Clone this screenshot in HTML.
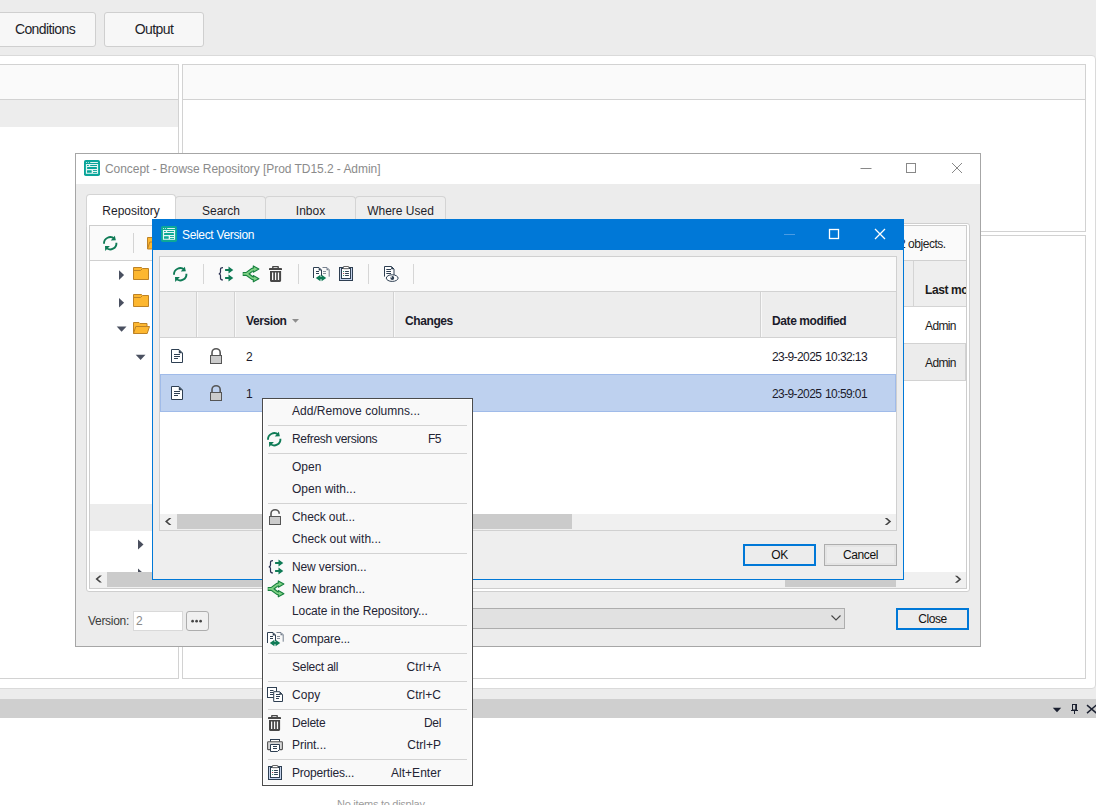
<!DOCTYPE html>
<html lang="en">
<head>
<meta charset="utf-8">
<title>Select Version</title>
<style>
html,body{margin:0;padding:0}
body{width:1096px;height:805px;overflow:hidden;position:relative;background:#ececec;font-family:"Liberation Sans",Arial,sans-serif;font-size:12px;color:#1b1b1b}
div,span{box-sizing:border-box}
.a{position:absolute}
.t{position:absolute;white-space:nowrap;line-height:1}
svg{position:absolute;overflow:visible}
/* top buttons */
.topbtn{position:absolute;top:12px;height:35px;border:1px solid #cfcfcf;border-radius:3px;background:#f7f7f7;font-size:14px;letter-spacing:-0.6px;text-align:center;line-height:33px;color:#1e1e2a}
/* main white container */
#main{left:-6px;top:55px;width:1102px;height:634px;background:#fff;border:1px solid #dadada;border-radius:4px}
.pnl{position:absolute;border:1px solid #d2d2d2;background:#fff}
.pnl .hd{position:absolute;left:0;right:0;top:0;height:35px;background:#fafafa;border-bottom:1px solid #d2d2d2}
/* dialog 1 */
#d1{left:75px;top:153px;width:906px;height:494px;background:#ececec;border:1px solid #a6a6a6}
#d1 .tb{position:absolute;left:0;top:0;right:0;height:30px;background:#fff}
.tab{position:absolute;top:43px;height:30px;border:1px solid #d4d4d4;border-bottom:none;border-radius:4px 4px 0 0;background:#eeeeee;font-size:12px;text-align:center;line-height:29px;color:#1e1e2a}
.tab.on{height:33px;background:#fff;line-height:33px}
/* dialog 2 */
#d2{left:152px;top:219px;width:752px;height:361px;background:#eeeeee;border:1px solid #0078d7}
#d2 .tb{position:absolute;left:0;top:0;right:0;height:30px;background:#0078d7}
.btn{position:absolute;height:22px;background:#ececec;box-shadow:inset 0 0 0 2px #e4e4e4;border:1px solid #adadad;text-align:center;font-size:12px;letter-spacing:-0.4px;line-height:20px;color:#111}
.btn.def{border:2px solid #0078d7;line-height:18px;box-shadow:none}
.gh{font-size:12px;font-weight:bold;letter-spacing:-0.4px;color:#1b1b2b}
.gd{font-size:12px;letter-spacing:-0.6px;word-spacing:1px;color:#1b1b2b}
/* context menu */
#cm{left:262px;top:398px;width:211px;height:388px;background:#f9f9f9;border:1px solid #4b4b4b;box-shadow:inset 0 0 0 1px #fff;font-size:12px;color:#242434}
#cm .i{position:absolute;left:29px;white-space:nowrap;line-height:22px;height:22px;margin-top:-1px}
#cm .k{position:absolute;right:31px;white-space:nowrap;line-height:22px;height:22px;margin-top:-1px}
#cm .s{position:absolute;left:5px;right:5px;height:1px;background:#d3d3d3}
</style>
</head>
<body>
<!-- top buttons -->
<div class="topbtn" style="left:-10px;width:106px;padding-left:4px">Conditions</div>
<div class="topbtn" style="left:104px;width:100px">Output</div>

<!-- main container -->
<div id="main" class="a"></div>
<div class="pnl" style="left:-2px;top:64px;width:181px;height:615px"><div class="hd"></div><div class="a" style="left:0;right:0;top:35px;height:27px;background:#ededed"></div></div>
<div class="pnl" style="left:182px;top:64px;width:904px;height:168px"><div class="hd"></div></div>
<div class="pnl" style="left:182px;top:235px;width:904px;height:444px"></div>

<!-- bottom dock -->
<div class="a" style="left:0;top:699px;width:1096px;height:19px;background:#cfcfcf"></div>
<!-- dock icons -->
<svg style="left:1052px;top:704px" width="46" height="11" viewBox="0 0 46 11"><path d="M0.800 3.800h8.400l-4.200 4.400z" fill="#1b2030"/><rect x="20.500" y="0.500" width="4" height="5.500" fill="none" stroke="#1b2030" stroke-width="1"/><path d="M24 0.500v5.500" stroke="#1b2030" stroke-width="1.600"/><path d="M19 6.500h7M22.500 6.500v3.500" stroke="#1b2030" stroke-width="1" fill="none"/><path d="M35 1.100l9.400 8M44.400 1.100l-9.400 8" stroke="#1b2030" stroke-width="1.400" fill="none"/></svg>
<div class="a" style="left:0;top:718px;width:1096px;height:87px;background:#fff"></div>
<div class="t" style="left:337px;top:799px;font-size:11px;letter-spacing:-0.28px;color:#9c9c9c">No items to display</div>

<!-- DIALOG 1 -->
<div id="d1" class="a"><div class="tb"></div></div>
<!-- app icon -->
<svg style="left:84px;top:160px" width="16" height="16" viewBox="0 0 16 16"><rect x="0" y="0" width="16" height="16" rx="1.800" fill="#0aa59a"/><circle cx="2.500" cy="2.500" r="0.550" fill="#dff5f1"/><circle cx="4.400" cy="2.500" r="0.550" fill="#dff5f1"/><rect x="6.200" y="2" width="7.700" height="1" fill="#dff5f1"/><rect x="1.900" y="4" width="12.200" height="9.800" fill="#e4f6f3"/><rect x="3" y="5" width="1.800" height="1" fill="#0aa59a"/><rect x="6.200" y="5" width="6.800" height="1" fill="#0aa59a"/><rect x="3" y="7" width="10" height="1.900" rx="0.400" fill="#0aa59a"/><rect x="3" y="10.200" width="4.700" height="2.600" rx="0.400" fill="#0aa59a"/><rect x="9" y="10.100" width="4" height="0.900" fill="#0aa59a"/><rect x="9" y="12" width="4" height="0.900" fill="#0aa59a"/></svg>
<div class="t" style="left:105px;top:163px;font-size:12px;letter-spacing:-0.05px;color:#8b8b8b">Concept - Browse Repository [Prod TD15.2 - Admin]</div>
<!-- window controls -->
<svg style="left:860px;top:162px" width="104" height="12" viewBox="0 0 104 12"><path d="M0.5 6.5h11" stroke="#888" stroke-width="1" fill="none"/><rect x="46.5" y="1.5" width="9" height="9" fill="none" stroke="#888" stroke-width="1"/><path d="M92 1l10 10M102 1l-10 10" stroke="#888" stroke-width="1" fill="none"/></svg>
<!-- tabs -->
<div class="tab" style="left:175px;width:91px;top:196px;padding-left:1px">Search</div>
<div class="tab" style="left:265px;width:91px;top:196px">Inbox</div>
<div class="tab" style="left:355px;width:91px;top:196px">Where Used</div>
<!-- tab page -->
<div class="a" style="left:86px;top:223px;width:884px;height:369px;border:1px solid #cfcfcf;border-radius:0 3px 3px 3px;background:#fff"></div>
<div class="tab on" style="left:86px;width:90px;top:194px">Repository</div>
<!-- inner panel -->
<div class="a" style="left:89px;top:225px;width:878px;height:364px;border:1px solid #cdcdcd;background:#fff"></div>
<div class="a" style="left:90px;top:226px;width:876px;height:35px;background:#fafafa;border-bottom:1px solid #d0d0d0"></div>
<div class="a" style="left:133px;top:233px;width:1px;height:20px;background:#d4d4d4"></div>
<!-- refresh icon d1 -->
<svg style="left:103px;top:236px" width="15" height="15" viewBox="0 0 15 15"><g fill="none" stroke="#0f7b56" stroke-width="1.900"><path d="M1 7.700A6.200 6.200 0 0 1 11.400 2.800"/><path d="M13.400 6.700A6.200 6.200 0 0 1 3.200 11.900"/></g><path d="M11.800 -0.300L12.900 4.200L7.800 4.400Z" fill="#0f7b56"/><path d="M2 10.100L6.900 10.100L2.200 14.900Z" fill="#0f7b56"/></svg>
<!-- toolbar folder (partly hidden) -->
<svg style="left:147px;top:237px" width="16" height="13" viewBox="0 0 16 13"><path d="M0.500 12v-11.500h5.500l1 1.200h7v3" fill="#fdb730" stroke="#bd8226"/><path d="M0.500 12l2.300-7h13.700l-2.300 7z" fill="#fdb730" stroke="#bd8226"/></svg>
<div class="t" style="left:908px;top:238px;font-size:12px;letter-spacing:-0.45px;color:#222">objects.</div>
<div class="t" style="left:899px;top:238px;font-size:12px;color:#222">2</div>
<!-- tree -->
<svg style="left:116px;top:266px" width="36" height="100" viewBox="0 0 36 100">
<path d="M3 4.200l5.100 4.850-5.100 4.850z" fill="#4a5060"/>
<path d="M3 31.900l5.100 4.850-5.100 4.850z" fill="#4a5060"/>
<path d="M0.700 60.500h9.800l-4.900 5.200z" fill="#4a5060"/>
<path d="M19.700 88.700h9.800l-4.900 5.200z" fill="#4a5060"/>
<path d="M17.500 1.500h8l1 1h6v11h-15z" fill="#fdb730" stroke="#bd8226"/><path d="M17.500 4.500h7l1.500-1.500" fill="none" stroke="#bd8226"/>
<path d="M17.500 28.500h8l1 1h6v11h-15z" fill="#fdb730" stroke="#bd8226"/><path d="M17.500 31.500h7l1.500-1.500" fill="none" stroke="#bd8226"/>
<path d="M17.500 67.500v-11h5.500l1 1h7v3" fill="#fdb730" stroke="#bd8226"/><path d="M17.500 67.500l2.300-7h13.700l-2.300 7z" fill="#fdb730" stroke="#bd8226" stroke-linejoin="round"/>
</svg>
<!-- d1 grid (right part) -->
<div class="a" style="left:904px;top:261px;width:62px;height:46px;background:#eeeeee;border-bottom:1px solid #d4d4d4"></div>
<div class="a" style="left:913px;top:261px;width:1px;height:46px;background:#d4d4d4"></div>
<div class="t" style="left:925px;top:284px;font-size:12px;font-weight:bold;letter-spacing:-0.4px;width:41px;overflow:hidden">Last modified by</div>
<div class="t" style="left:925px;top:320px;font-size:12px;letter-spacing:-0.62px">Admin</div>
<div class="a" style="left:904px;top:343px;width:62px;height:38px;background:#ececec;border:1px solid #d2d2d2;border-left:none"></div>
<div class="t" style="left:925px;top:357px;font-size:12px;letter-spacing:-0.62px">Admin</div>
<!-- d1 tree gray row -->
<div class="a" style="left:90px;top:504px;width:70px;height:27px;background:#ececec"></div>
<svg style="left:137px;top:539px" width="8" height="34" viewBox="0 0 8 34"><path d="M1 0.500l5.500 5-5.500 5z" fill="#4a4f5e"/><path d="M1 29.500l5.500 5-5.500 5z" fill="#4a4f5e"/></svg>
<!-- d1 hscroll -->
<div class="a" style="left:90px;top:572px;width:876px;height:16px;background:#f0f0f0"></div>
<div class="a" style="left:107px;top:572px;width:300px;height:15px;background:#cbcbcb"></div>
<div class="a" style="left:785px;top:572px;width:111px;height:15px;background:#cbcbcb"></div>
<svg style="left:94px;top:575px" width="870" height="9" viewBox="0 0 870 9"><path d="M7.900 0.600h-2.300l-4.100 3.500 4.100 3.500h2.300l-4-3.500z" fill="#444"/><path d="M860.900 0.800h2.300l4.100 3.500-4.100 3.500h-2.300l4-3.500z" fill="#444"/></svg>
<!-- d1 bottom row -->
<div class="t" style="left:88px;top:615px;font-size:12px;letter-spacing:-0.3px;color:#3c3c3c">Version:</div>
<div class="a" style="left:133px;top:611px;width:50px;height:20px;border:1px solid #d9d9d9;background:#fff"></div>
<div class="t" style="left:136px;top:615px;font-size:12px;color:#8a8a8a">2</div>
<div class="a" style="left:186px;top:611px;width:23px;height:20px;border:1px solid #adadad;border-radius:3px;background:#f0f0f0"></div>
<svg style="left:191px;top:619px" width="13" height="4" viewBox="0 0 13 4"><circle cx="1.600" cy="2.200" r="1.350" fill="#444"/><circle cx="5.600" cy="2.200" r="1.350" fill="#444"/><circle cx="9.600" cy="2.200" r="1.350" fill="#444"/></svg>
<div class="a" style="left:400px;top:608px;width:445px;height:21px;border:1px solid #adadad;background:#e1e1e1"></div>
<svg style="left:831px;top:615px" width="10" height="6" viewBox="0 0 10 6"><path d="M0.500 0.500l4.500 4.500 4.500-4.500" fill="none" stroke="#444" stroke-width="1.100"/></svg>
<div class="btn def" style="left:896px;top:608px;width:73px">Close</div>

<!-- DIALOG 2 -->
<div id="d2" class="a"><div class="tb"></div></div>
<svg style="left:161px;top:226px" width="16" height="16" viewBox="0 0 16 16"><rect x="0" y="0" width="16" height="16" rx="1.800" fill="#0da996"/><circle cx="2.500" cy="2.500" r="0.550" fill="#dff5f1"/><circle cx="4.400" cy="2.500" r="0.550" fill="#dff5f1"/><rect x="6.200" y="2" width="7.700" height="1" fill="#dff5f1"/><rect x="1.900" y="4" width="12.200" height="9.800" fill="#e4f6f3"/><rect x="3" y="5" width="1.800" height="1" fill="#0da996"/><rect x="6.200" y="5" width="6.800" height="1" fill="#0da996"/><rect x="3" y="7" width="10" height="1.900" rx="0.400" fill="#0da996"/><rect x="3" y="10.200" width="4.700" height="2.600" rx="0.400" fill="#0da996"/><rect x="9" y="10.100" width="4" height="0.900" fill="#0da996"/><rect x="9" y="12" width="4" height="0.900" fill="#0da996"/></svg>
<div class="t" style="left:182px;top:229px;font-size:12px;letter-spacing:-0.33px;color:#fff">Select Version</div>
<svg style="left:784px;top:228px" width="104" height="12" viewBox="0 0 104 12"><path d="M0 6.500h11" stroke="#4a9be3" stroke-width="1" fill="none"/><rect x="45.500" y="1.500" width="9" height="9" fill="none" stroke="#fff" stroke-width="1.300"/><path d="M91 1l10 10M101 1l-10 10" stroke="#fff" stroke-width="1.300" fill="none"/></svg>
<!-- d2 panel -->
<div class="a" style="left:159px;top:256px;width:738px;height:275px;border:1px solid #d0d0d0;background:#fff"></div>
<div class="a" style="left:160px;top:257px;width:736px;height:35px;background:#fafafa;border-bottom:1px solid #d2d2d2"></div>
<div class="a" style="left:160px;top:292px;width:736px;height:46px;background:#ededed;border-bottom:1px solid #d2d2d2"></div>
<div class="a" style="left:196px;top:292px;width:2px;height:45px;background:#d2d2d2;border-right:1px solid #f8f8f8"></div>
<div class="a" style="left:234px;top:292px;width:2px;height:45px;background:#d2d2d2;border-right:1px solid #f8f8f8"></div>
<div class="a" style="left:393px;top:292px;width:2px;height:45px;background:#d2d2d2;border-right:1px solid #f8f8f8"></div>
<div class="a" style="left:760px;top:292px;width:2px;height:45px;background:#d2d2d2;border-right:1px solid #f8f8f8"></div>
<!-- toolbar -->
<svg style="left:173px;top:267px" width="15" height="15" viewBox="0 0 15 15"><g fill="none" stroke="#0f7b56" stroke-width="1.900"><path d="M1 7.700A6.200 6.200 0 0 1 11.400 2.800"/><path d="M13.400 6.700A6.200 6.200 0 0 1 3.200 11.900"/></g><path d="M11.800 -0.300L12.900 4.200L7.800 4.400Z" fill="#0f7b56"/><path d="M2 10.100L6.900 10.100L2.200 14.900Z" fill="#0f7b56"/></svg>
<div class="a" style="left:203px;top:264px;width:1px;height:20px;background:#d6d6d6"></div>
<svg style="left:218px;top:267px" width="16" height="14" viewBox="0 0 16 14"><path d="M5 0.600c-1.900 0-2.500 0.500-2.500 1.700v2.700c0 1-0.500 1.700-1.700 1.800 1.200 0.100 1.700 0.800 1.700 1.800v2.700c0 1.200 0.600 1.700 2.500 1.700" fill="none" stroke="#2b3152" stroke-width="1.200"/><path d="M7.100 1.900h3.400v-2.300l4.800 3.400-4.800 3.400v-2.300h-3.400z" fill="#0f7b56"/><path d="M7.100 9.900h3.400v-2.300l4.800 3.400-4.800 3.400v-2.300h-3.400z" fill="#0f7b56"/></svg>
<svg style="left:242px;top:266px" width="17" height="16" viewBox="0 0 17 16"><g fill="none" stroke-linejoin="round"><path d="M0.700 7.900h3.300c2.600 0 4.400-4.600 8.600-4.800M4 7.900c2.600 0 4.400 4.600 8.600 4.700" stroke="#17803f" stroke-width="4"/></g><path d="M11.300 -0.100l5.600 3.100-5.600 3.200z" fill="#7fd184" stroke="#17803f" stroke-width="1.100" stroke-linejoin="round"/><path d="M11.300 9.500l5.600 3.200-5.600 3.100z" fill="#7fd184" stroke="#17803f" stroke-width="1.100" stroke-linejoin="round"/><g fill="none"><path d="M1.300 7.900h2.700c2.600 0 4.400-4.600 8.600-4.800M4 7.900c2.600 0 4.400 4.600 8.600 4.700" stroke="#7fd184" stroke-width="1.800"/></g></svg>
<svg style="left:269px;top:266px" width="13" height="16" viewBox="0 0 13 16"><path d="M3.100 2.200v-1.200c0-0.600 0.400-1 1-1h4.800c0.600 0 1 0.400 1 1v1.200h-1.400v-0.900h-4v0.900z" fill="#474747"/><path d="M0.700 2h11.600c0.500 0 0.700 0.400 0.700 0.900v1h-13v-1c0-0.500 0.200-0.900 0.700-0.900z" fill="#474747"/><path d="M1 4.900h11.100v9.700c0 0.800-0.500 1.300-1.300 1.300h-8.500c-0.800 0-1.300-0.500-1.300-1.300zM3 6.500v7.600h1.250v-7.600zM5.950 6.500v7.600h1.250v-7.600zM8.850 6.500v7.600h1.250v-7.600z" fill="#474747" fill-rule="evenodd"/></svg>
<div class="a" style="left:298px;top:264px;width:1px;height:20px;background:#d6d6d6"></div>
<svg style="left:313px;top:266px" width="17" height="15" viewBox="0 0 17 15"><path d="M9.500 1.500h4.500l2.200 2.200v7" fill="none" stroke="#76808e" stroke-width="1"/><path d="M13.500 1.500v2.700h2.700z" fill="#76808e"/><path d="M10 5.500h3M10 7.500h3" stroke="#8a929e" stroke-width="1"/><path d="M0.500 12v-10.500h5.500l2.500 2.500v6" fill="#fff" stroke="#2e3f52" stroke-width="1"/><path d="M5.700 1.500v3h3z" fill="#2e3f52"/><path d="M3 5.500h3M3 7.500h3" stroke="#2e3f52" stroke-width="1"/><path d="M2.800 12L7.400 8.700V10.800H8.600V8.700L13.200 12L8.600 15.300V13.200H7.400V15.300Z" fill="#0f7b56"/></svg>
<svg style="left:339px;top:266px" width="14" height="15" viewBox="0 0 14 15"><rect x="0.500" y="1.500" width="13" height="13" fill="#c5d3ec" stroke="#2e3f52" stroke-width="1"/><rect x="2.500" y="2.500" width="9" height="10" fill="#fff" stroke="#2e3f52" stroke-width="1"/><rect x="4.300" y="0.500" width="5.600" height="2.200" rx="0.500" fill="#fff" stroke="#555" stroke-width="0.900"/><path d="M6.100 5.500h3.800M6.100 7.500h3.800M6.100 9.500h3.800" stroke="#2e3f52" stroke-width="1"/><circle cx="4.600" cy="5.500" r="0.600" fill="#0e7c57"/><circle cx="4.600" cy="7.500" r="0.600" fill="#a1232b"/><circle cx="4.600" cy="9.500" r="0.600" fill="#0e7c57"/></svg>
<div class="a" style="left:368px;top:264px;width:1px;height:20px;background:#d6d6d6"></div>
<svg style="left:384px;top:266px" width="15" height="16" viewBox="0 0 15 16"><path d="M0.500 10.600v-10.100h7l2.500 2.500v6" fill="#fff" stroke="#2e3f52" stroke-width="1"/><path d="M7.200 0.500v2.800h2.800z" fill="#2e3f52"/><path d="M2.300 3.500h4.700M2.300 5.500h4.700M2.300 7.500h4.700" stroke="#2e3f52" stroke-width="1"/><ellipse cx="8.200" cy="12.100" rx="5.900" ry="3.300" fill="#fff" stroke="#2e3f52" stroke-width="1"/><circle cx="8.300" cy="12" r="1.900" fill="#2e3f52"/><circle cx="7.300" cy="11" r="0.700" fill="#fff"/></svg>
<div class="a" style="left:413px;top:264px;width:1px;height:20px;background:#d6d6d6"></div>
<!-- header -->
<div class="t gh" style="left:246px;top:315px">Version</div>
<svg style="left:292px;top:319px" width="8" height="4" viewBox="0 0 8 4"><path d="M0 0h7l-3.500 3.800z" fill="#8d8d8d"/></svg>
<div class="t gh" style="left:405px;top:315px">Changes</div>
<div class="t gh" style="left:772px;top:315px">Date modified</div>
<!-- rows -->
<svg style="left:171px;top:349px" width="12" height="14" viewBox="0 0 12 14"><path d="M0.500 0.500h7.500l3.500 3.500v9.500h-11z" fill="#fff" stroke="#2e3f52" stroke-width="1"/><path d="M7.800 0.500v3.700h3.700z" fill="#2e3f52"/><path d="M3 5.500h6M3 7.500h6M3 9.500h4" stroke="#2e3f52" stroke-width="1"/></svg>
<svg style="left:210px;top:348px" width="12" height="16" viewBox="0 0 12 16"><path d="M2 7.500V4.800A4.100 4.100 0 0 1 10.200 4.800V7.500" fill="none" stroke="#555" stroke-width="1.600"/><rect x="0.500" y="7.500" width="11" height="8" fill="#cbcbcb" stroke="#555" stroke-width="1"/></svg>
<div class="t gd" style="left:246px;top:351px">2</div>
<div class="t gd" style="left:772px;top:351px">23-9-2025 10:32:13</div>
<div class="a" style="left:160px;top:374px;width:736px;height:38px;background:#bed1ef;border:1px solid #a0bbe9"></div>
<svg style="left:171px;top:386px" width="12" height="14" viewBox="0 0 12 14"><path d="M0.500 0.500h7.500l3.500 3.500v9.500h-11z" fill="#fff" stroke="#2e3f52" stroke-width="1"/><path d="M7.800 0.500v3.700h3.700z" fill="#2e3f52"/><path d="M3 5.500h6M3 7.500h6M3 9.500h4" stroke="#2e3f52" stroke-width="1"/></svg>
<svg style="left:210px;top:385px" width="12" height="16" viewBox="0 0 12 16"><path d="M2 7.500V4.800A4.100 4.100 0 0 1 10.200 4.800V7.500" fill="none" stroke="#555" stroke-width="1.600"/><rect x="0.500" y="7.500" width="11" height="8" fill="#cbcbcb" stroke="#555" stroke-width="1"/></svg>
<div class="t gd" style="left:246px;top:388px">1</div>
<div class="t gd" style="left:772px;top:388px">23-9-2025 10:59:01</div>
<!-- d2 hscroll -->
<div class="a" style="left:160px;top:514px;width:736px;height:16px;background:#f0f0f0"></div>
<div class="a" style="left:177px;top:514px;width:395px;height:15px;background:#cbcbcb"></div>
<svg style="left:164px;top:517px" width="730" height="9" viewBox="0 0 730 9"><path d="M7.400 1h-2.300l-4.100 3.500 4.100 3.500h2.300l-4-3.500z" fill="#444"/><path d="M720.800 1h2.300l4.100 3.500-4.100 3.500h-2.300l4-3.500z" fill="#444"/></svg>
<div class="btn def" style="left:743px;top:544px;width:73px">OK</div>
<div class="btn" style="left:824px;top:544px;width:73px">Cancel</div>

<!-- CONTEXT MENU -->
<div id="cm" class="a">
<div class="i" style="top:2px;letter-spacing:0.04px">Add/Remove columns...</div>
<div class="s" style="top:26px"></div>
<svg style="left:4px;top:33px" width="15" height="15" viewBox="0 0 15 15"><g fill="none" stroke="#0f7b56" stroke-width="1.900"><path d="M1 7.700A6.200 6.200 0 0 1 11.400 2.800"/><path d="M13.400 6.700A6.200 6.200 0 0 1 3.200 11.900"/></g><path d="M11.800 -0.300L12.900 4.200L7.800 4.400Z" fill="#0f7b56"/><path d="M2 10.100L6.900 10.100L2.200 14.900Z" fill="#0f7b56"/></svg><div class="i" style="top:30px;letter-spacing:-0.3px">Refresh versions</div><div class="k" style="top:30px;letter-spacing:-0.5px">F5</div>
<div class="s" style="top:54px"></div>
<div class="i" style="top:58px;letter-spacing:-0.01px">Open</div>
<div class="i" style="top:80px">Open with...</div>
<div class="s" style="top:104px"></div>
<svg style="left:6px;top:110px" width="12" height="16" viewBox="0 0 12 16"><path d="M2 7.500V4.800A4.100 4.100 0 0 1 10.200 4.800" fill="none" stroke="#555" stroke-width="1.600"/><rect x="0.500" y="7.500" width="11" height="8" fill="#cbcbcb" stroke="#555" stroke-width="1"/></svg><div class="i" style="top:108px;letter-spacing:-0.08px">Check out...</div>
<div class="i" style="top:130px;letter-spacing:0.03px">Check out with...</div>
<div class="s" style="top:154px"></div>
<svg style="left:5px;top:161px" width="16" height="14" viewBox="0 0 16 14"><path d="M5 0.600c-1.900 0-2.500 0.500-2.500 1.700v2.700c0 1-0.500 1.700-1.700 1.800 1.200 0.100 1.700 0.800 1.700 1.800v2.700c0 1.200 0.600 1.700 2.500 1.700" fill="none" stroke="#2b3152" stroke-width="1.200"/><path d="M7.100 1.900h3.400v-2.300l4.800 3.400-4.800 3.400v-2.300h-3.400z" fill="#0f7b56"/><path d="M7.100 9.900h3.400v-2.300l4.800 3.400-4.800 3.400v-2.300h-3.400z" fill="#0f7b56"/></svg><div class="i" style="top:158px;letter-spacing:-0.12px">New version...</div>
<svg style="left:4px;top:182px" width="17" height="16" viewBox="0 0 17 16"><g fill="none" stroke-linejoin="round"><path d="M0.700 7.900h3.300c2.600 0 4.400-4.600 8.600-4.800M4 7.900c2.600 0 4.400 4.600 8.600 4.700" stroke="#17803f" stroke-width="4"/></g><path d="M11.300 -0.100l5.600 3.100-5.600 3.200z" fill="#7fd184" stroke="#17803f" stroke-width="1.100" stroke-linejoin="round"/><path d="M11.300 9.500l5.600 3.200-5.600 3.100z" fill="#7fd184" stroke="#17803f" stroke-width="1.100" stroke-linejoin="round"/><g fill="none"><path d="M1.300 7.900h2.700c2.600 0 4.400-4.600 8.600-4.800M4 7.900c2.600 0 4.400 4.600 8.600 4.700" stroke="#7fd184" stroke-width="1.800"/></g></svg><div class="i" style="top:180px;letter-spacing:-0.07px">New branch...</div>
<div class="i" style="top:202px;letter-spacing:-0.1px">Locate in the Repository...</div>
<div class="s" style="top:226px"></div>
<svg style="left:4px;top:232px" width="17" height="15" viewBox="0 0 17 15"><path d="M9.500 1.500h4.500l2.200 2.200v7" fill="none" stroke="#76808e" stroke-width="1"/><path d="M13.500 1.500v2.700h2.700z" fill="#76808e"/><path d="M10 5.500h3M10 7.500h3" stroke="#8a929e" stroke-width="1"/><path d="M0.500 12v-10.500h5.500l2.500 2.500v6" fill="#fff" stroke="#2e3f52" stroke-width="1"/><path d="M5.700 1.500v3h3z" fill="#2e3f52"/><path d="M3 5.500h3M3 7.500h3" stroke="#2e3f52" stroke-width="1"/><path d="M2.800 12L7.400 8.700V10.800H8.600V8.700L13.200 12L8.600 15.300V13.200H7.400V15.300Z" fill="#0f7b56"/></svg><div class="i" style="top:230px;letter-spacing:-0.13px">Compare...</div>
<div class="s" style="top:254px"></div>
<div class="i" style="top:258px;letter-spacing:-0.25px">Select all</div><div class="k" style="top:258px;letter-spacing:0.15px">Ctrl+A</div>
<div class="s" style="top:282px"></div>
<svg style="left:4px;top:288px" width="16" height="15" viewBox="0 0 16 15"><rect x="0.500" y="0.500" width="9" height="10" fill="#fff" stroke="#2e3f52" stroke-width="1"/><path d="M3 3.500h3.500M3 5.500h3.500M3 7.500h3.500" stroke="#2e3f52" stroke-width="1"/><path d="M6.700 4.700h6l2.800 2.800v7h-8.800z" fill="#fff" stroke="#2e3f52" stroke-width="1"/><path d="M12.500 4.700v3h3z" fill="#2e3f52"/><path d="M9 7.500h4M9 9.500h4M9 11.500h3" stroke="#2e3f52" stroke-width="1"/></svg><div class="i" style="top:286px;letter-spacing:0.07px">Copy</div><div class="k" style="top:286px;letter-spacing:0.03px">Ctrl+C</div>
<div class="s" style="top:310px"></div>
<svg style="left:5px;top:316px" width="13" height="16" viewBox="0 0 13 16"><path d="M3.100 2.200v-1.200c0-0.600 0.400-1 1-1h4.800c0.600 0 1 0.400 1 1v1.200h-1.400v-0.900h-4v0.900z" fill="#474747"/><path d="M0.700 2h11.600c0.500 0 0.700 0.400 0.700 0.900v1h-13v-1c0-0.500 0.200-0.900 0.700-0.900z" fill="#474747"/><path d="M1 4.900h11.100v9.700c0 0.800-0.500 1.300-1.300 1.300h-8.500c-0.800 0-1.300-0.500-1.300-1.300zM3 6.500v7.600h1.250v-7.600zM5.950 6.500v7.600h1.250v-7.600zM8.850 6.500v7.600h1.250v-7.600z" fill="#474747" fill-rule="evenodd"/></svg><div class="i" style="top:314px;letter-spacing:-0.21px">Delete</div><div class="k" style="top:314px;letter-spacing:-0.3px">Del</div>
<svg style="left:4px;top:340px" width="16" height="14" viewBox="0 0 16 14"><rect x="3.500" y="0.500" width="9" height="3" fill="#fff" stroke="#2e3f52" stroke-width="1"/><rect x="0.600" y="2.800" width="14.800" height="7.800" rx="0.600" fill="#d9d9d9" stroke="#555" stroke-width="1.100"/><path d="M3.500 5.500h9v5l-2 2h-7z" fill="#fff" stroke="#2e3f52" stroke-width="1"/><path d="M6 7.500h4M6 9.500h4" stroke="#2e3f52" stroke-width="1"/></svg><div class="i" style="top:336px;letter-spacing:-0.06px">Print...</div><div class="k" style="top:336px;letter-spacing:0.02px">Ctrl+P</div>
<div class="s" style="top:360px"></div>
<svg style="left:5px;top:366px" width="14" height="15" viewBox="0 0 14 15"><rect x="0.500" y="1.500" width="13" height="13" fill="#c5d3ec" stroke="#2e3f52" stroke-width="1"/><rect x="2.500" y="2.500" width="9" height="10" fill="#fff" stroke="#2e3f52" stroke-width="1"/><rect x="4.300" y="0.500" width="5.600" height="2.200" rx="0.500" fill="#fff" stroke="#555" stroke-width="0.900"/><path d="M6.100 5.500h3.800M6.100 7.500h3.800M6.100 9.500h3.800" stroke="#2e3f52" stroke-width="1"/><circle cx="4.600" cy="5.500" r="0.600" fill="#0e7c57"/><circle cx="4.600" cy="7.500" r="0.600" fill="#a1232b"/><circle cx="4.600" cy="9.500" r="0.600" fill="#0e7c57"/></svg><div class="i" style="top:364px;letter-spacing:-0.2px">Properties...</div><div class="k" style="top:364px;letter-spacing:0.04px">Alt+Enter</div>
</div>

</body>
</html>
